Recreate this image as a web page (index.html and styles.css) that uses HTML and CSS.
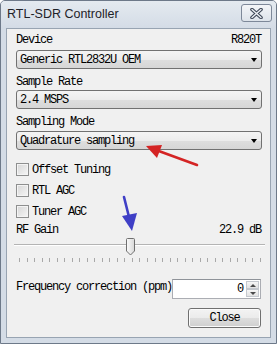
FILE: index.html
```html
<!DOCTYPE html>
<html lang="en">
<head>
    <meta charset="UTF-8">
    <meta name="viewport" content="width=device-width, initial-scale=1.0">
    <title>RTL-SDR Controller</title>
    <link rel="stylesheet" href="styles.css">
</head>
<body>
    <div class="window">
        <div class="titlebar">
            <span class="title">RTL-SDR Controller</span>
            <div class="close-x">
                <svg width="13" height="11" viewBox="0 0 13 11">
                    <path d="M2 1.5 L11 9.5 M11 1.5 L2 9.5" stroke="#3d4757" stroke-width="3.6" stroke-linecap="round"/>
                    <path d="M2 1.5 L11 9.5 M11 1.5 L2 9.5" stroke="#eef1f5" stroke-width="1.4" stroke-linecap="round"/>
                </svg>
            </div>
        </div>

        <div class="client">
            <div class="label-row device-row"><span>Device</span><span>R820T</span></div>
            <div class="combo device-combo"><span>Generic RTL2832U OEM</span><span class="combo-arrow"></span></div>

            <div class="label-row rate-row"><span>Sample Rate</span></div>
            <div class="combo rate-combo"><span>2.4 MSPS</span><span class="combo-arrow"></span></div>

            <div class="label-row mode-row"><span>Sampling Mode</span></div>
            <div class="combo mode-combo"><span>Quadrature sampling</span><span class="combo-arrow"></span></div>

            <div class="check first-check"><span class="box"></span><span>Offset Tuning</span></div>
            <div class="check"><span class="box"></span><span>RTL AGC</span></div>
            <div class="check"><span class="box"></span><span>Tuner AGC</span></div>

            <div class="label-row gain-row"><span>RF Gain</span><span>22.9 dB</span></div>
            <div class="slider">
                <div class="track"></div>
                <svg class="thumb" width="11" height="18" viewBox="0 0 11 18">
                    <defs>
                        <linearGradient id="tg" x1="0" y1="0" x2="1" y2="0">
                            <stop offset="0" stop-color="#fbfbfb"/>
                            <stop offset="1" stop-color="#d8d8d8"/>
                        </linearGradient>
                    </defs>
                    <path d="M1.5 1.5 Q1.5 0.5 2.5 0.5 H8.5 Q9.5 0.5 9.5 1.5 V13 L5.5 17 L1.5 13 Z" fill="url(#tg)" stroke="#6f6f6f"/>
                </svg>
            </div>
            <div class="ticks"></div>

            <div class="freq-row">
                <span class="freq-label">Frequency correction (ppm)</span>
                <div class="spinbox">
                    <span class="spin-value">0</span>
                    <div class="spin-buttons">
                        <span class="spin-btn"><span class="tri-up"></span></span>
                        <span class="spin-btn"><span class="tri-down"></span></span>
                    </div>
                </div>
            </div>

            <div class="button">Close</div>
        </div>

        <svg class="notes" width="277" height="344" viewBox="0 0 277 344">
            <g stroke="#d42424" stroke-width="2.6" stroke-linecap="round">
                <line x1="197" y1="165" x2="156" y2="150"/>
            </g>
            <polygon points="146,146 162,145 157,158" fill="#d42424"/>
            <g stroke="#3f3fc6" stroke-width="2.6" stroke-linecap="round">
                <line x1="124" y1="197" x2="129" y2="217"/>
            </g>
            <polygon points="132,231 122,216 137,213" fill="#3f3fc6"/>
        </svg>
    </div>
</body>
</html>
```

FILE: styles.css
```css
body {
    margin: 0;
    font-family: "Liberation Mono", monospace;
    font-size: 12px;
    letter-spacing: -1.2px;
    color: #000;
}

.window {
    position: relative;
    width: 277px;
    height: 344px;
    box-sizing: border-box;
    border: 1px solid #6d7989;
    border-radius: 5px 5px 0 0;
    background: #d4dce6;
    padding: 0 5px 5px;
    display: flex;
    flex-direction: column;
}

.titlebar {
    height: 27px;
    margin: 0 -5px;
    padding: 0 4px 0 6px;
    display: flex;
    justify-content: space-between;
    border-radius: 4px 4px 0 0;
    background: linear-gradient(#e4eaf0, #d4dce6);
}

.title {
    font-family: "Liberation Sans", Arial, sans-serif;
    font-size: 12.5px;
    letter-spacing: 0;
    color: #1e2228;
    align-self: center;
    margin-top: -1px;
}

.close-x {
    width: 29px;
    height: 16px;
    margin-top: 3px;
    border: 1px solid #7d8899;
    border-radius: 3px;
    background: linear-gradient(#f3f5f8, #dde3ea);
    display: flex;
    align-items: center;
    justify-content: center;
}

.client {
    flex: 1;
    background: #f0f0f0;
    border: 1px solid #98a4b2;
    padding: 0 8px 0 9px;
    display: flex;
    flex-direction: column;
}

.label-row {
    height: 12px;
    line-height: 12px;
    display: flex;
    justify-content: space-between;
    padding-right: 1px;
}

.device-row { margin-top: 5px; }
.rate-row { margin-top: 7px; }
.mode-row { margin-top: 7px; }
.gain-row { margin-top: 6px; }

.combo {
    height: 19px;
    box-sizing: border-box;
    border: 1px solid #717171;
    border-radius: 3px;
    background: linear-gradient(#f4f4f4 0%, #ececec 50%, #dedede 51%, #d6d6d6 100%);
    display: flex;
    align-items: center;
    justify-content: space-between;
    padding: 0 4px 0 3px;
}

.device-combo { margin-top: 4px; }
.rate-combo { margin-top: 2px; }
.mode-combo { margin-top: 3px; }

.combo-arrow {
    width: 0;
    height: 0;
    border-left: 3.5px solid transparent;
    border-right: 3.5px solid transparent;
    border-top: 4px solid #000;
}

.check {
    height: 13px;
    margin-top: 8px;
    display: flex;
    align-items: center;
    gap: 3px;
}

.first-check { margin-top: 13px; }

.box {
    width: 13px;
    height: 13px;
    box-sizing: border-box;
    border: 1px solid #8e8f8f;
    background: linear-gradient(135deg, #d6d6d6, #f6f6f6);
    box-shadow: inset 0 0 0 1px #f4f4f4;
}

.slider {
    position: relative;
    height: 20px;
    margin: 0 -3px 0 -2px;
}

.track {
    margin-top: 8px;
    height: 1px;
    background: #b4b4b4;
    border-bottom: 1px solid #fff;
}

.thumb {
    position: absolute;
    top: 2px;
    left: 111px;
}

.ticks {
    margin: 2px 1px 0 3px;
    height: 4px;
    background: repeating-linear-gradient(to right, #a8a8a8 0 1px, transparent 1px 7.53px);
}

.freq-row {
    height: 20px;
    margin-top: 17px;
    display: flex;
    justify-content: space-between;
    padding-right: 1px;
}

.freq-label {
    margin-top: 2px;
    line-height: 12px;
}

.spinbox {
    width: 89px;
    box-sizing: border-box;
    border: 1px solid #abadb3;
    border-top-color: #8f9399;
    background: #fff;
    display: flex;
    justify-content: flex-end;
    align-items: center;
    padding: 1px;
}

.spin-value {
    margin-right: 3px;
}

.spin-buttons {
    width: 13px;
    height: 16px;
    display: flex;
    flex-direction: column;
}

.spin-btn {
    flex: 1;
    border: 1px solid #c4c8ce;
    background: linear-gradient(#f6f6f6, #e2e2e2);
    display: flex;
    align-items: center;
    justify-content: center;
}

.tri-up,
.tri-down {
    width: 0;
    height: 0;
    border-left: 3px solid transparent;
    border-right: 3px solid transparent;
}

.tri-up { border-bottom: 3px solid #4a4a4a; }
.tri-down { border-top: 3px solid #4a4a4a; }

.button {
    align-self: flex-end;
    width: 73px;
    height: 20px;
    box-sizing: border-box;
    margin: 9px 1px 0 0;
    border: 1px solid #707070;
    border-radius: 3px;
    background: linear-gradient(#f3f3f3 0%, #ebebeb 50%, #dddddd 51%, #cfcfcf 100%);
    box-shadow: inset 0 0 0 1px #fbfbfb;
    text-align: center;
    line-height: 18px;
}

.notes {
    position: absolute;
    top: -1px;
    left: -1px;
    pointer-events: none;
}
```
